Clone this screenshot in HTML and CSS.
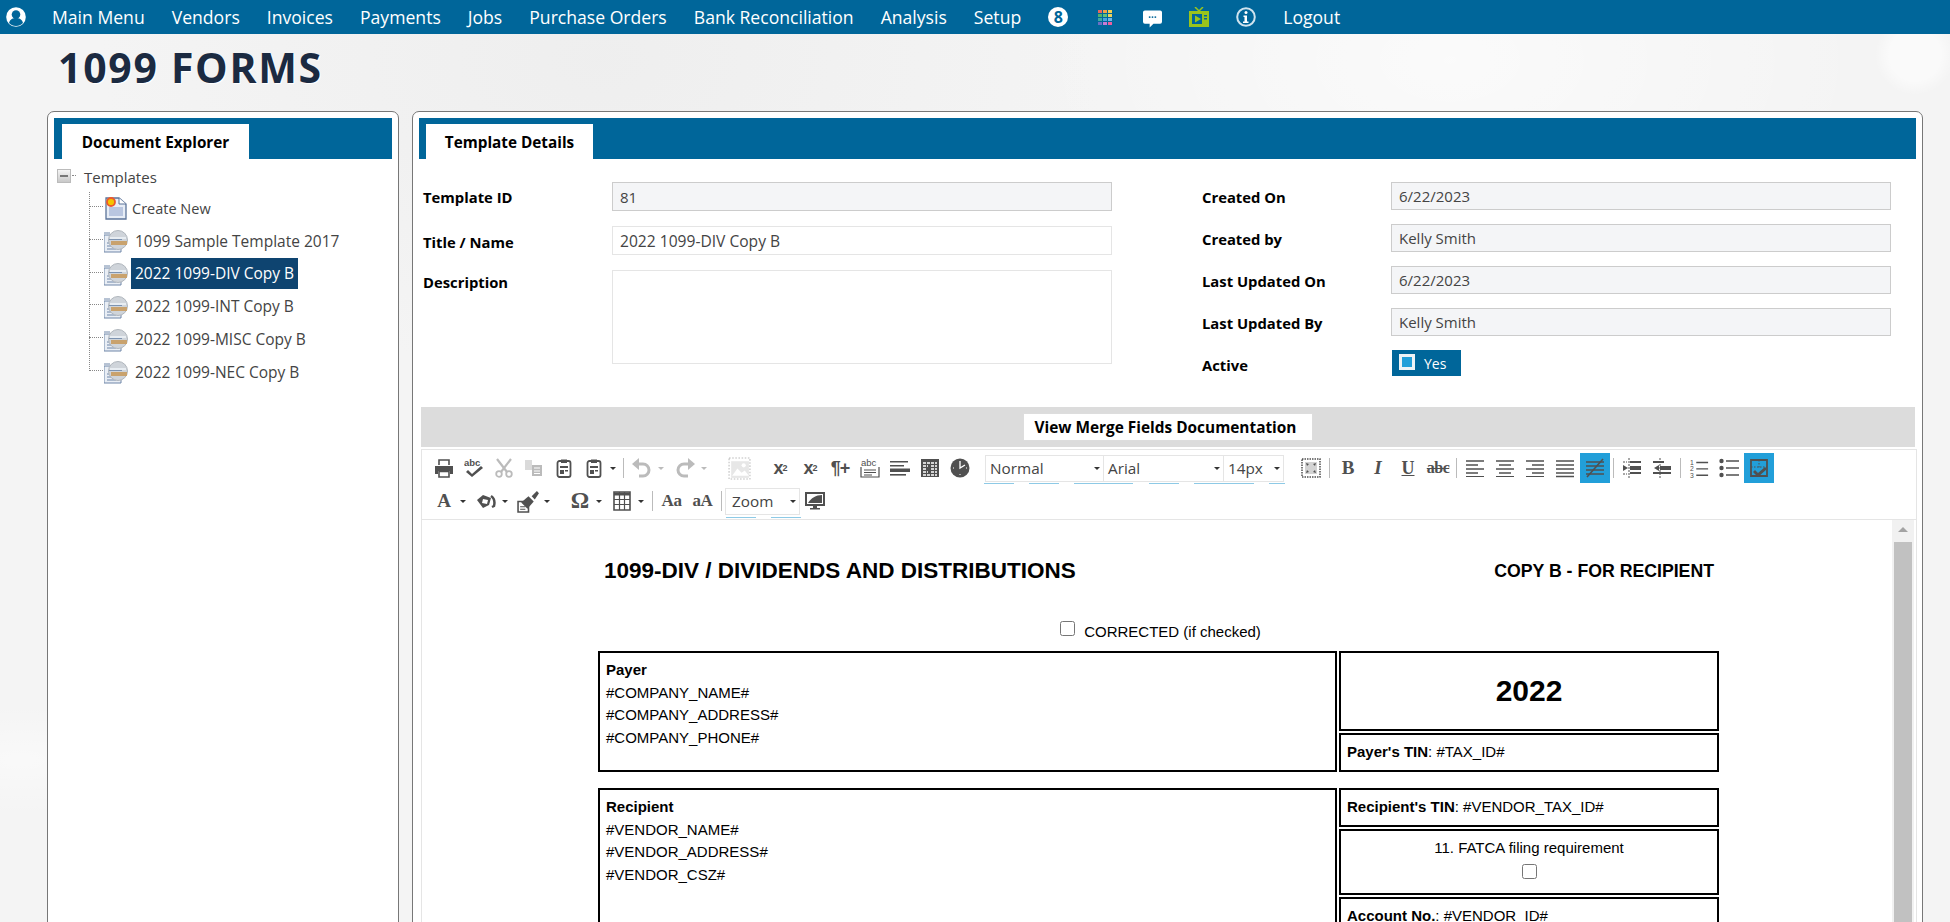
FILE: index.html
```html
<!DOCTYPE html>
<html lang="en">
<head>
  <meta charset="UTF-8">
  <title>1099 Forms</title>
  <link rel="stylesheet" href="styles.css">
</head>
<body>
  <svg class="icon-defs" width="0" height="0" aria-hidden="true">
    <symbol id="i-print" viewBox="0 0 20 20">
      <path d="M5 7V2h10v5" fill="none" stroke="currentColor" stroke-width="1.6"/>
      <path d="M1 8h18v8h-3v-3H4v3H1z" fill="currentColor"/>
      <path d="M5 13.5h10V19H5z" fill="none" stroke="currentColor" stroke-width="1.6"/>
    </symbol>
    <symbol id="i-cut" viewBox="0 0 20 20">
      <path d="M3 1l10 13M17 1L7 14" fill="none" stroke="currentColor" stroke-width="2.2"/>
      <circle cx="5" cy="16" r="2.8" fill="none" stroke="currentColor" stroke-width="1.8"/>
      <circle cx="15" cy="16" r="2.8" fill="none" stroke="currentColor" stroke-width="1.8"/>
    </symbol>
    <symbol id="i-copy" viewBox="0 0 20 20">
      <path d="M1 2h7v10H1z" fill="currentColor" opacity=".55"/>
      <path d="M8 7h10v11H8z" fill="currentColor"/>
      <path d="M10 10h6M10 13h6M10 15.5h6" stroke="#fff" stroke-width="1"/>
    </symbol>
    <symbol id="i-paste" viewBox="0 0 20 20">
      <rect x="3.5" y="3" width="13" height="16" rx="2" fill="none" stroke="currentColor" stroke-width="1.8"/>
      <path d="M7 1.5h6V5H7z" fill="currentColor"/>
      <path d="M6 8h8v2H6zM6 12h4v4H6zM11 12h3v1.500h-3z" fill="currentColor"/>
    </symbol>
    <symbol id="i-undo" viewBox="0 0 20 20">
      <path d="M5 6h6a6 6 0 0 1 0 12H7" fill="none" stroke="currentColor" stroke-width="3"/>
      <path d="M7 0v12L0 6z" fill="currentColor"/>
    </symbol>
    <symbol id="i-redo" viewBox="0 0 20 20">
      <path d="M15 6H9a6 6 0 0 0 0 12h4" fill="none" stroke="currentColor" stroke-width="3"/>
      <path d="M13 0v12l7-6z" fill="currentColor"/>
    </symbol>
    <symbol id="i-image" viewBox="0 0 22 22">
      <path d="M1 1h20v20H1z" fill="none" stroke="currentColor" stroke-dasharray="1.500 1.500"/>
      <path d="M3 4h17v16H3z" fill="currentColor" opacity=".35"/>
      <path d="M4 18l5-7 4 4 3-2 4 5z" fill="#fff"/>
      <circle cx="15" cy="8" r="2" fill="#fff"/>
    </symbol>
    <symbol id="i-block" viewBox="0 0 20 20">
      <path d="M0 3h18v1.600H0zM0 7h14v1.600H0z" fill="currentColor"/>
      <path d="M0 10.500h20v3.500H0z" fill="currentColor"/>
      <path d="M0 16h16v1.600H0z" fill="currentColor"/>
    </symbol>
    <symbol id="i-calc" viewBox="0 0 20 20">
      <path d="M1 1h18v18H1z" fill="currentColor"/>
      <path d="M3 5h14M3 8h5M11 8h6M3 11h4M11 11h6M3 14h5M11 14h6M3 17h14" stroke="#fff" stroke-width="1.300" stroke-dasharray="3 1"/>
    </symbol>
    <symbol id="i-clock" viewBox="0 0 20 20">
      <circle cx="10" cy="10" r="9.500" fill="currentColor"/>
      <path d="M10 3v7l5-3" fill="none" stroke="#fff" stroke-width="1.300"/>
      <path d="M3 10h1M16 10h1M10 16v1" stroke="#fff"/>
    </symbol>
    <symbol id="i-full" viewBox="0 0 20 20">
      <path d="M1 1h18v18H1z" fill="none" stroke="currentColor" stroke-width="1.500" stroke-dasharray="1.500 1"/>
      <path d="M4 4h12v12H4z" fill="currentColor" opacity=".25"/>
      <path d="M5 5l3 1-2 2zM15 5l-1 3-2-2zM5 15l1-3 2 2zM15 15l-3-1 2-2z" fill="currentColor"/>
    </symbol>
    <symbol id="i-left" viewBox="0 0 20 20">
      <path d="M1 3h18M1 7h12M1 11h18M1 15h12" stroke="currentColor" stroke-width="1.600"/>
      <path d="M1 18.500h18" stroke="currentColor" stroke-width="1"/>
    </symbol>
    <symbol id="i-center" viewBox="0 0 20 20">
      <path d="M1 3h18M4 7h12M1 11h18M4 15h12" stroke="currentColor" stroke-width="1.600"/>
      <path d="M1 18.500h18" stroke="currentColor" stroke-width="1"/>
    </symbol>
    <symbol id="i-right" viewBox="0 0 20 20">
      <path d="M1 3h18M7 7h12M1 11h18M7 15h12" stroke="currentColor" stroke-width="1.600"/>
      <path d="M1 18.500h18" stroke="currentColor" stroke-width="1"/>
    </symbol>
    <symbol id="i-justify" viewBox="0 0 20 20">
      <path d="M1 3h18M1 7h18M1 11h18M1 15h18M1 18.500h18" stroke="currentColor" stroke-width="1.600"/>
    </symbol>
    <symbol id="i-nobreak" viewBox="0 0 20 20">
      <path d="M1 4h18M1 8h18M1 12h18M1 16h18" stroke="currentColor" stroke-width="1.600"/>
      <path d="M2 19L18 1" stroke="currentColor" stroke-width="1.600"/>
    </symbol>
    <symbol id="i-indent" viewBox="0 0 20 20">
      <path d="M8 3h11v2H8zM8 8h11v4H8zM8 14h11v2H8z" fill="currentColor"/>
      <path d="M1 7l5 3-5 3z" fill="currentColor"/>
      <path d="M1 4h4M1 16h4M7 0v20" stroke="currentColor" stroke-dasharray="2 1"/>
    </symbol>
    <symbol id="i-outdent" viewBox="0 0 20 20">
      <path d="M1 3h11v2H1zM8 8h11v4H8zM1 14h18v2H1z" fill="currentColor"/>
      <path d="M7 7l-5 3 5 3z" fill="currentColor"/>
      <path d="M8 0v20" stroke="currentColor" stroke-dasharray="2 1"/>
    </symbol>
    <symbol id="i-ul" viewBox="0 0 20 20">
      <circle cx="2.500" cy="3" r="2.200" fill="currentColor"/>
      <circle cx="2.500" cy="10" r="2.200" fill="currentColor"/>
      <circle cx="2.500" cy="17" r="2.200" fill="currentColor"/>
      <path d="M7 3h13M7 10h13M7 17h13" stroke="currentColor" stroke-width="1.500"/>
    </symbol>
    <symbol id="i-blocks" viewBox="0 0 20 20">
      <path d="M2 2h16v16H2z" fill="none" stroke="currentColor" stroke-width="1.800"/>
      <path d="M10 2v8M2 9h16" stroke="currentColor" stroke-dasharray="1.500 1.500"/>
      <path d="M6 12l3 3 7-6 2 2-9 8-5-5z" fill="currentColor"/>
    </symbol>
    <symbol id="i-fill" viewBox="0 0 20 20">
      <path d="M1 9l6-5 8 3-2 7-6 3z" fill="currentColor"/>
      <path d="M7 8l5 1-1 4-5-1z" fill="#fff"/>
      <path d="M15 5c3 2 4 6 3 10l-2 1" fill="none" stroke="currentColor" stroke-width="2.500"/>
    </symbol>
    <symbol id="i-brush" viewBox="0 0 22 22">
      <path d="M1 11h7l3 3v7H1z" fill="none" stroke="currentColor" stroke-width="1.500"/>
      <path d="M4 12l7-6 5 5-6 7z" fill="currentColor"/>
      <path d="M14 6l5-5 2 2-4 6z" fill="currentColor"/>
      <path d="M3 16h5M3 18.500h5" stroke="currentColor"/>
    </symbol>
    <symbol id="i-table" viewBox="0 0 20 20">
      <path d="M2 1h16v18H2z" fill="#fff" stroke="currentColor" stroke-width="1.600"/>
      <path d="M2 3h16" stroke="currentColor" stroke-width="3"/>
      <path d="M7.500 1v18M12.500 1v18M2 8.500h16M2 13.500h16" stroke="currentColor" stroke-width="1.200"/>
    </symbol>
    <symbol id="i-monitor" viewBox="0 0 20 20">
      <path d="M0 1h20v14H0z" fill="currentColor"/>
      <path d="M2 3h16v10H2z" fill="#fff"/>
      <path d="M3 12c3-5 8-8 14-8v8z" fill="currentColor"/>
      <path d="M8 15h4v2h3v1.500H5V17h3z" fill="currentColor"/>
    </symbol>
    <symbol id="i-tpl" viewBox="0 0 24 24">
      <path d="M0 4h6M0 6h17v17H0z" fill="#e9eef5" stroke="#6f86a8" stroke-width="1"/>
      <path d="M3 14h9M3 17h9M3 20h9" stroke="#6f86a8"/>
      <circle cx="14" cy="11" r="9.500" fill="#cfd4da" stroke="#b0b6bd"/>
      <path d="M6 8h16v2H6z" fill="#e8edf2"/>
      <path d="M7 12h16v4H7z" fill="#c9a26d"/>
      <path d="M5 10h13v1H5z" fill="#7d93b0"/>
    </symbol>
    <symbol id="i-new" viewBox="0 0 22 24">
      <path d="M1 2h13l7 6v15H1z" fill="#e7edf6" stroke="#5b7399" stroke-width="1.300"/>
      <path d="M14 2v6h7" fill="#fff" stroke="#5b7399"/>
      <path d="M4 11h14v9H4z" fill="#b9c6e0"/>
      <circle cx="6" cy="6" r="4" fill="#f5c400" stroke="#ec5a2c" stroke-width="1.800"/>
    </symbol>
  </svg>

  <nav class="topnav">
    <svg class="nav-user" viewBox="0 0 20 20">
      <circle cx="10" cy="10" r="9.800" fill="#fff"/>
      <circle cx="10" cy="7.500" r="4.300" fill="#00669a"/>
      <path d="M3 16c1-4 4-5 7-5s6 1 7 5c-2 2-4 3-7 3s-5-1-7-3z" fill="#00669a"/>
    </svg>
    <a class="nav-link" href="#">Main Menu</a>
    <a class="nav-link" href="#">Vendors</a>
    <a class="nav-link" href="#">Invoices</a>
    <a class="nav-link" href="#">Payments</a>
    <a class="nav-link" href="#">Jobs</a>
    <a class="nav-link" href="#">Purchase Orders</a>
    <a class="nav-link" href="#">Bank Reconciliation</a>
    <a class="nav-link" href="#">Analysis</a>
    <a class="nav-link" href="#">Setup</a>
    <span class="nav-badge">8</span>
    <svg class="nav-icon nav-grid" viewBox="0 0 14 15">
      <rect x="0" y="0" width="4" height="3" fill="#e8685c"/><rect x="5" y="0" width="4" height="3" fill="#f0a04a"/><rect x="10" y="0" width="4" height="3" fill="#f4cf4f"/>
      <rect x="0" y="4" width="4" height="3" fill="#54b06a"/><rect x="5" y="4" width="4" height="3" fill="#62c07a"/><rect x="10" y="4" width="4" height="3" fill="#f2d35c"/>
      <rect x="0" y="8" width="4" height="3" fill="#3fa9a0"/><rect x="5" y="8" width="4" height="3" fill="#4aa3df"/><rect x="10" y="8" width="4" height="3" fill="#6fb5e8"/>
      <rect x="0" y="12" width="4" height="3" fill="#6b6fc4"/><rect x="5" y="12" width="4" height="3" fill="#c77bd4"/><rect x="10" y="12" width="4" height="3" fill="#ec5f9e"/>
    </svg>
    <svg class="nav-icon nav-chat" viewBox="0 0 20 18">
      <path d="M2 0h16a2 2 0 0 1 2 2v10a2 2 0 0 1-2 2h-7l-4 4v-4H2a2 2 0 0 1-2-2V2a2 2 0 0 1 2-2z" fill="#fff"/>
      <circle cx="7" cy="7" r="1" fill="#00669a"/><circle cx="10" cy="7" r="1" fill="#00669a"/><circle cx="13" cy="7" r="1" fill="#00669a"/>
    </svg>
    <svg class="nav-icon nav-tv" viewBox="0 0 20 20">
      <path d="M6 0l4 4 4-4" fill="none" stroke="#9ac41c" stroke-width="1.500"/>
      <path d="M0 4h20v16H0z" fill="#9ac41c"/>
      <path d="M3 7h10v10H3z" fill="#00669a"/>
      <path d="M6 8.500l6 3.500-6 3.500z" fill="#9ac41c"/>
      <path d="M15 8h3v1.500h-3zM15 11h3v1.500h-3z" fill="#00669a"/>
    </svg>
    <svg class="nav-icon nav-info" viewBox="0 0 20 20">
      <circle cx="10" cy="10" r="8.800" fill="none" stroke="#cfe3ee" stroke-width="2"/>
      <circle cx="10" cy="5.500" r="1.500" fill="#fff"/>
      <path d="M7.500 8.500h3.500v6h1.500v1.500h-5.500v-1.500h1.500v-4.500h-1z" fill="#fff"/>
    </svg>
    <a class="nav-link nav-logout" href="#">Logout</a>
  </nav>

  <h1 class="page-title">1099 FORMS</h1>

  <main class="panels">
    <section class="panel panel-explorer">
      <div class="tabbar"><span class="tab tab-explorer">Document Explorer</span></div>
      <div class="tree-root">
        <span class="tree-toggle"></span>
        <span class="tree-root-label">Templates</span>
      </div>
      <ul class="tree-children">
        <li class="tree-item"><svg class="tree-icon"><use href="#i-new"/></svg><span class="tree-label tree-new">Create New</span></li>
        <li class="tree-item"><svg class="tree-icon"><use href="#i-tpl"/></svg><span class="tree-label">1099 Sample Template 2017</span></li>
        <li class="tree-item"><svg class="tree-icon"><use href="#i-tpl"/></svg><span class="tree-label selected">2022 1099-DIV Copy B</span></li>
        <li class="tree-item"><svg class="tree-icon"><use href="#i-tpl"/></svg><span class="tree-label">2022 1099-INT Copy B</span></li>
        <li class="tree-item"><svg class="tree-icon"><use href="#i-tpl"/></svg><span class="tree-label">2022 1099-MISC Copy B</span></li>
        <li class="tree-item"><svg class="tree-icon"><use href="#i-tpl"/></svg><span class="tree-label">2022 1099-NEC Copy B</span></li>
      </ul>
    </section>

    <section class="panel panel-details">
      <div class="tabbar"><span class="tab tab-details">Template Details</span></div>

      <div class="details-form">
        <div class="form-col form-col-left">
          <label class="form-label">Template ID</label>
          <input class="field field-readonly" type="text" value="81" readonly>
          <label class="form-label label-low">Title / Name</label>
          <input class="field field-title" type="text" value="2022 1099-DIV Copy B">
          <label class="form-label label-top">Description</label>
          <textarea class="field field-area"></textarea>
        </div>
        <div class="form-col form-col-right">
          <label class="form-label">Created On</label>
          <input class="field field-readonly" type="text" value="6/22/2023" readonly>
          <label class="form-label">Created by</label>
          <input class="field field-readonly" type="text" value="Kelly Smith" readonly>
          <label class="form-label">Last Updated On</label>
          <input class="field field-readonly" type="text" value="6/22/2023" readonly>
          <label class="form-label">Last Updated By</label>
          <input class="field field-readonly" type="text" value="Kelly Smith" readonly>
          <label class="form-label">Active</label>
          <div class="toggle"><span class="toggle-box"></span><span>Yes</span></div>
        </div>
      </div>

      <div class="merge-bar"><button class="merge-btn">View Merge Fields Documentation</button></div>

      <div class="editor">
        <div class="toolbar">
          <div class="tb-row">
            <span class="tb"><svg><use href="#i-print"/></svg></span>
            <span class="tb"><svg viewBox="0 0 20 20">
              <text x="0" y="8" font-size="9.5" font-weight="bold" font-family="Liberation Sans" fill="currentColor">abc</text>
              <path d="M4 12l4 4 9-8 2 2-11 9-6-5z" fill="currentColor"/>
            </svg></span>
            <span class="tb off"><svg><use href="#i-cut"/></svg></span>
            <span class="tb off"><svg><use href="#i-copy"/></svg></span>
            <span class="tb"><svg><use href="#i-paste"/></svg></span>
            <span class="tb"><svg><use href="#i-paste"/></svg></span>
            <span class="caret"></span>
            <span class="sep"></span>
            <span class="tb off"><svg><use href="#i-undo"/></svg></span>
            <span class="caret off"></span>
            <span class="tb off"><svg><use href="#i-redo"/></svg></span>
            <span class="caret off"></span>
            <span class="tb off tb-gap"><svg class="wide"><use href="#i-image"/></svg></span>
            <span class="tb tb-gap tb-txt tb-sup">x<sup>2</sup></span>
            <span class="tb tb-txt tb-sup">x<sub>2</sub></span>
            <span class="tb tb-txt">¶+</span>
            <span class="tb"><svg viewBox="0 0 20 20">
              <text x="1" y="8" font-size="9.5" font-family="Liberation Sans" fill="currentColor">abc</text>
              <path d="M1 9v10h18V9M4 12h12M4 14.500h12M4 17h8" fill="none" stroke="currentColor" stroke-width="1.200"/>
            </svg></span>
            <span class="tb"><svg><use href="#i-block"/></svg></span>
            <span class="tb"><svg><use href="#i-calc"/></svg></span>
            <span class="tb"><svg><use href="#i-clock"/></svg></span>
            <span class="sel sel-format">Normal<span class="caret"></span></span>
            <span class="sel sel-font">Arial<span class="caret"></span></span>
            <span class="sel sel-size">14px<span class="caret"></span></span>
            <span class="tb tb-full"><svg><use href="#i-full"/></svg></span>
            <span class="sep"></span>
            <span class="tb tb-serif tb-b">B</span>
            <span class="tb tb-serif tb-i">I</span>
            <span class="tb tb-serif tb-u">U</span>
            <span class="tb tb-serif tb-s">abc</span>
            <span class="sep"></span>
            <span class="tb"><svg><use href="#i-left"/></svg></span>
            <span class="tb"><svg><use href="#i-center"/></svg></span>
            <span class="tb"><svg><use href="#i-right"/></svg></span>
            <span class="tb"><svg><use href="#i-justify"/></svg></span>
            <span class="tb active"><svg><use href="#i-nobreak"/></svg></span>
            <span class="sep"></span>
            <span class="tb"><svg><use href="#i-indent"/></svg></span>
            <span class="tb"><svg><use href="#i-outdent"/></svg></span>
            <span class="sep"></span>
            <span class="tb"><svg viewBox="0 0 20 22">
              <text x="0" y="7.500" font-size="7.500" font-family="Liberation Sans" fill="currentColor">1</text>
              <text x="0" y="14.500" font-size="7.500" font-family="Liberation Sans" fill="currentColor">2</text>
              <text x="0" y="21.500" font-size="7.500" font-family="Liberation Sans" fill="currentColor">3</text>
              <path d="M7 5h13M7 12h13M7 19h13" stroke="currentColor" stroke-width="1.500"/>
            </svg></span>
            <span class="tb"><svg><use href="#i-ul"/></svg></span>
            <span class="tb active"><svg><use href="#i-blocks"/></svg></span>
          </div>
          <div class="tb-row tb-row-second">
            <span class="tb tb-serif tb-a">A</span><span class="caret"></span>
            <span class="tb"><svg><use href="#i-fill"/></svg></span><span class="caret"></span>
            <span class="tb"><svg class="wide"><use href="#i-brush"/></svg></span><span class="caret"></span>
            <span class="tb tb-serif tb-omega">Ω</span><span class="caret"></span>
            <span class="tb"><svg><use href="#i-table"/></svg></span><span class="caret"></span>
            <span class="sep"></span>
            <span class="tb tb-serif tb-aa">Aa</span>
            <span class="tb tb-serif tb-aa">aA</span>
            <span class="sep"></span>
            <span class="sel sel-zoom">Zoom<span class="caret"></span></span>
            <span class="tb"><svg><use href="#i-monitor"/></svg></span>
          </div>
          <div class="tb-marks tb-marks-one">
            <i style="left:562px;width:30px"></i><i style="left:607px;width:30px"></i><i style="left:652px;width:59px"></i><i style="left:727px;width:30px"></i><i style="left:772px;width:60px"></i><i style="left:847px;width:16px"></i>
          </div>
          <div class="tb-marks tb-marks-two">
            <i style="left:304px;width:30px"></i><i style="left:349px;width:30px"></i>
          </div>
        </div>

        <div class="edit-area">
          <div class="doc">
            <div class="doc-head">
              <span class="doc-title">1099-DIV / DIVIDENDS AND DISTRIBUTIONS</span>
              <span class="doc-copy">COPY B - FOR RECIPIENT</span>
            </div>
            <div class="doc-corrected"><input type="checkbox" class="doc-check"> CORRECTED (if checked)</div>

            <div class="doc-row doc-row-payer">
              <div class="box box-main">
                <b>Payer</b><br>#COMPANY_NAME#<br>#COMPANY_ADDRESS#<br>#COMPANY_PHONE#
              </div>
              <div class="box-stack">
                <div class="box box-year">2022</div>
                <div class="box box-line"><b>Payer's TIN</b>: #TAX_ID#</div>
              </div>
            </div>

            <div class="doc-row">
              <div class="box box-main">
                <b>Recipient</b><br>#VENDOR_NAME#<br>#VENDOR_ADDRESS#<br>#VENDOR_CSZ#
              </div>
              <div class="box-stack">
                <div class="box box-line"><b>Recipient's TIN</b>: #VENDOR_TAX_ID#</div>
                <div class="box box-fatca">11. FATCA filing requirement<br><input type="checkbox" class="doc-check"></div>
                <div class="box box-line"><b>Account No.</b>: #VENDOR_ID#</div>
              </div>
            </div>
          </div>
          <div class="scrollbar">
            <span class="scroll-up"></span>
            <span class="scroll-thumb"></span>
          </div>
        </div>
      </div>
    </section>
  </main>
</body>
</html>
```

FILE: styles.css
```css
* {
  box-sizing: border-box;
}

html, body {
  height: 100%;
}

body {
  margin: 0;
  overflow: hidden;
  font-family: "Open Sans", "Noto Sans", sans-serif;
  color: #444;
  background-color: #f4f4f4;
  background-image:
    radial-gradient(circle at 1915px 55px, rgba(255,255,255,.55) 0, rgba(255,255,255,.55) 26px, rgba(255,255,255,0) 40px),
    radial-gradient(ellipse at 1450px 60px, rgba(255,255,255,.6) 0, rgba(255,255,255,0) 420px),
    radial-gradient(ellipse at 20px 760px, rgba(255,255,255,.5) 0, rgba(255,255,255,0) 140px),
    radial-gradient(ellipse at 600px 60px, rgba(236,236,236,.7) 0, rgba(236,236,236,0) 500px);
}

.icon-defs {
  position: absolute;
}

/* top menu */
.topnav {
  display: flex;
  align-items: center;
  height: 34px;
  padding-left: 6px;
  background-color: #00669a;
}

.nav-user {
  width: 20px;
  height: 20px;
  margin-right: 26px;
}

.nav-link {
  margin-right: 27px;
  color: #fff;
  font-size: 17.6px;
  text-decoration: none;
  white-space: nowrap;
}

.nav-badge {
  display: flex;
  align-items: center;
  justify-content: center;
  width: 20px;
  height: 20px;
  margin-right: 30px;
  border-radius: 50%;
  background-color: #fff;
  color: #00669a;
  font-size: 16px;
  font-weight: 700;
}

.nav-icon {
  flex: none;
}

.nav-grid {
  width: 14px;
  height: 15px;
  margin-right: 31px;
}

.nav-chat {
  width: 19px;
  height: 18px;
  margin-top: 3px;
  margin-right: 27px;
}

.nav-tv {
  width: 20px;
  height: 20px;
  margin-right: 27px;
}

.nav-info {
  width: 20px;
  height: 20px;
  margin-right: 27px;
}

/* heading */
.page-title {
  height: 77px;
  margin: 0;
  padding: 8px 0 0 58px;
  color: #1b2a41;
  font-size: 41px;
  font-weight: 700;
  line-height: 50px;
  letter-spacing: 1.7px;
  text-shadow: 1px 1px 1px #fff;
}

/* panels */
.panels {
  display: flex;
  gap: 13px;
  padding: 0 27px 0 47px;
}

.panel {
  height: 1000px;
  padding: 6px;
  border: 1px solid #777;
  border-radius: 7px;
  background-color: #fff;
}

.panel-explorer {
  flex: none;
  width: 352px;
}

.panel-details {
  flex: 1;
  min-width: 0;
}

.tabbar {
  display: flex;
  align-items: flex-end;
  height: 41px;
  background-color: #00669a;
}

.tab {
  display: flex;
  align-items: center;
  justify-content: center;
  height: 35px;
  background-color: #fff;
  color: #000;
  font-size: 15.3px;
  font-weight: 700;
}

.tab-explorer {
  width: 187px;
  margin-left: 8px;
}

.tab-details {
  width: 167px;
  margin-left: 7px;
}

/* tree */
.tree-root {
  display: flex;
  align-items: center;
  height: 30px;
  margin-top: 3px;
  padding-left: 3px;
}

.tree-toggle {
  position: relative;
  width: 14px;
  height: 14px;
  margin-right: 13px;
  margin-top: -3px;
  border: 1px solid #bbb;
  background: linear-gradient(#f5f5f5, #c8c8c8);
}

.tree-toggle::after {
  content: "";
  position: absolute;
  left: 2px;
  top: 5px;
  width: 8px;
  height: 2px;
  background-color: #777;
}

.tree-toggle::before {
  content: "";
  position: absolute;
  left: 14px;
  top: 5px;
  width: 4px;
  border-top: 1px dotted #888;
}

.tree-root-label {
  font-size: 15px;
}

.tree-children {
  position: relative;
  margin: 0 0 0 35px;
  padding: 0;
  list-style: none;
}

.tree-children::before {
  content: "";
  position: absolute;
  left: 0;
  top: 0;
  bottom: 18px;
  border-left: 1px dotted #888;
}

.tree-item {
  position: relative;
  display: flex;
  align-items: center;
  height: 32.8px;
  padding-left: 15px;
}

.tree-item::before {
  content: "";
  position: absolute;
  left: 0;
  top: 14px;
  width: 14px;
  border-top: 1px dotted #888;
}

.tree-icon {
  flex: none;
  width: 24px;
  height: 24px;
  margin-right: 3px;
}

.tree-label {
  height: 31px;
  padding: 0 4px;
  font-size: 15.5px;
  line-height: 31px;
  white-space: nowrap;
}

.tree-new {
  padding-left: 1px;
  font-size: 14.5px;
}

.tree-label.selected {
  background-color: #0e4470;
  color: #fff;
}

/* details form */
.details-form {
  display: flex;
  gap: 90px;
  height: 248px;
  padding: 23px 0 0 4px;
}

.form-col {
  display: grid;
  flex: none;
  grid-template-columns: 189px 500px;
  align-content: start;
}

.form-col-left {
  grid-template-rows: 29px 29px 94px;
  row-gap: 15px;
}

.form-col-right {
  grid-template-rows: repeat(4, 28px) 26px;
  row-gap: 14px;
}

.form-label {
  padding-top: 5px;
  color: #000;
  font-size: 14.8px;
  font-weight: 700;
  line-height: 20px;
}

.label-low {
  padding-top: 6px;
}

.label-top {
  padding-top: 2px;
}

.field {
  display: block;
  width: 100%;
  height: 100%;
  padding: 0 7px;
  border: 1px solid #e5e5e5;
  border-radius: 0;
  background-color: #fff;
  color: #444;
  font-family: inherit;
  font-size: 15px;
  outline: none;
  resize: none;
}

.field-title {
  font-size: 15.6px;
}

.field-readonly {
  border-color: #ccc;
  background-color: #f4f5f7;
}

.toggle {
  display: flex;
  align-items: center;
  width: 69px;
  margin-left: 1px;
  padding-left: 7px;
  background-color: #00669a;
  color: #fff;
  font-size: 14px;
}

.toggle-box {
  width: 16px;
  height: 16px;
  margin-right: 9px;
  margin-top: -2px;
  border: 3px solid #eef3f6;
  background-color: #229fd9;
}

/* merge bar */
.merge-bar {
  display: flex;
  justify-content: center;
  height: 40px;
  margin: 0 1px 2px 2px;
  padding-top: 6px;
  background-color: #dcdcdc;
}

.merge-btn {
  width: 290px;
  height: 28px;
  padding: 0 5px 0 0;
  border: 1px solid #ddd;
  background-color: #fff;
  color: #000;
  font-family: inherit;
  font-size: 15.4px;
  font-weight: 700;
}

/* editor */
.editor {
  margin: 0 -1px 0 2px;
  border: 1px solid #e5e5e5;
}

.toolbar {
  position: relative;
  height: 69px;
  padding: 3px 0 0 7px;
  background-color: #fff;
}

.tb-row {
  display: flex;
  align-items: center;
  height: 30px;
}

.tb-row-second {
  height: 34px;
  margin-top: 1px;
}

.tb {
  display: flex;
  flex: none;
  align-items: center;
  justify-content: center;
  width: 30px;
  height: 30px;
  color: #505050;
}

.tb svg {
  width: 20px;
  height: 20px;
}

.tb svg.wide {
  width: 23px;
  height: 23px;
}

.tb.off {
  color: #bbb;
}

.tb.active {
  background-color: #229fd9;
}

.tb-gap {
  margin-left: 11px;
}

.tb-txt {
  font-family: "Liberation Sans", sans-serif;
  font-size: 18px;
  font-weight: 700;
  letter-spacing: -1px;
}

.tb-sup sup, .tb-sup sub {
  font-size: 9px;
  line-height: 0;
}

.tb-serif {
  font-family: "Liberation Serif", serif;
  font-weight: 700;
}

.tb-b { font-size: 19px; }
.tb-i { font-size: 19px; font-style: italic; }
.tb-u { font-size: 18px; text-decoration: underline; }
.tb-s { font-size: 16px; text-decoration: line-through; letter-spacing: -.5px; }
.tb-a { font-size: 19px; }
.tb-omega { font-size: 23px; margin-left: 10px; }
.tb-aa { font-size: 17px; width: 31px; letter-spacing: -.5px; }

.caret {
  flex: none;
  width: 0;
  height: 0;
  margin: 0 4px 0 1px;
  border-top: 3px solid #333;
  border-left: 3px solid transparent;
  border-right: 3px solid transparent;
}

.caret.off {
  margin-right: 6px;
  border-top-color: #bbb;
}

.tb-row-second .caret {
  margin-right: 5px;
}

.sep {
  flex: none;
  width: 1px;
  height: 20px;
  margin: 0 3px;
  background-color: #bbb;
}

.sel {
  display: flex;
  flex: none;
  align-items: center;
  justify-content: space-between;
  height: 27px;
  padding: 0 3px 0 4px;
  border: 1px solid #e5e5e5;
  color: #444;
  font-size: 15.3px;
}

.tb-row .sel .caret {
  margin: 0;
}

.sel-format {
  width: 119px;
  margin-left: 10px;
}

.sel-font {
  width: 121px;
  margin-left: -1px;
}

.sel-size {
  width: 61px;
  margin-left: -1px;
}

.sel-zoom {
  width: 75px;
  padding-left: 6px;
}

.tb-full {
  margin-left: 12px;
}

.tb-marks i {
  position: absolute;
  height: 1px;
  background-color: #8ecae6;
}

.tb-marks-one i {
  top: 33px;
}

.tb-marks-two i {
  top: 67px;
}

/* document */
.edit-area {
  display: flex;
  height: 500px;
  border-top: 1px solid #e5e5e5;
}

.doc {
  flex: none;
  width: 1121px;
  margin-left: 176px;
  color: #000;
  font-family: "Liberation Sans", sans-serif;
  font-size: 15px;
}

.doc-head {
  display: flex;
  align-items: center;
  justify-content: space-between;
  height: 24px;
  margin-top: 39px;
  padding: 0 5px 0 6px;
  font-weight: 700;
}

.doc-title {
  font-size: 22.5px;
}

.doc-copy {
  font-size: 17.7px;
}

.doc-corrected {
  height: 24px;
  margin-top: 37px;
  margin-bottom: 7px;
  padding-left: 462px;
  line-height: 24px;
}

.doc-check {
  width: 15px;
  height: 15px;
  margin: 0 5px 0 0;
  vertical-align: 1px;
}

.doc-row {
  display: flex;
  gap: 2px;
}

.doc-row-payer {
  margin-bottom: 16px;
}

.box {
  border: 2px solid #000;
}

.box-main {
  flex: 1;
  padding: 6px 6px;
  line-height: 22.5px;
}

.box-stack {
  display: flex;
  flex: none;
  flex-direction: column;
  gap: 2px;
  width: 380px;
}

.box-year {
  display: flex;
  align-items: center;
  justify-content: center;
  height: 80px;
  font-size: 30px;
  font-weight: 700;
}

.box-line {
  height: 39px;
  padding: 0 6px;
  line-height: 33px;
}

.box-fatca {
  height: 66px;
  padding-top: 6px;
  text-align: center;
  line-height: 22px;
}

.box-fatca .doc-check {
  margin: 5px 0 0;
}

.scrollbar {
  display: flex;
  flex: none;
  flex-direction: column;
  width: 22px;
  margin-left: auto;
  margin-right: 2px;
  background-color: #f1f1f1;
}

.scroll-up {
  position: relative;
  height: 22px;
}

.scroll-up::after {
  content: "";
  position: absolute;
  left: 6px;
  top: 7px;
  border-bottom: 5px solid #a3a3a3;
  border-left: 5px solid transparent;
  border-right: 5px solid transparent;
}

.scroll-thumb {
  flex: 1;
  margin: 0 2px;
  background-color: #c1c1c1;
}
```
